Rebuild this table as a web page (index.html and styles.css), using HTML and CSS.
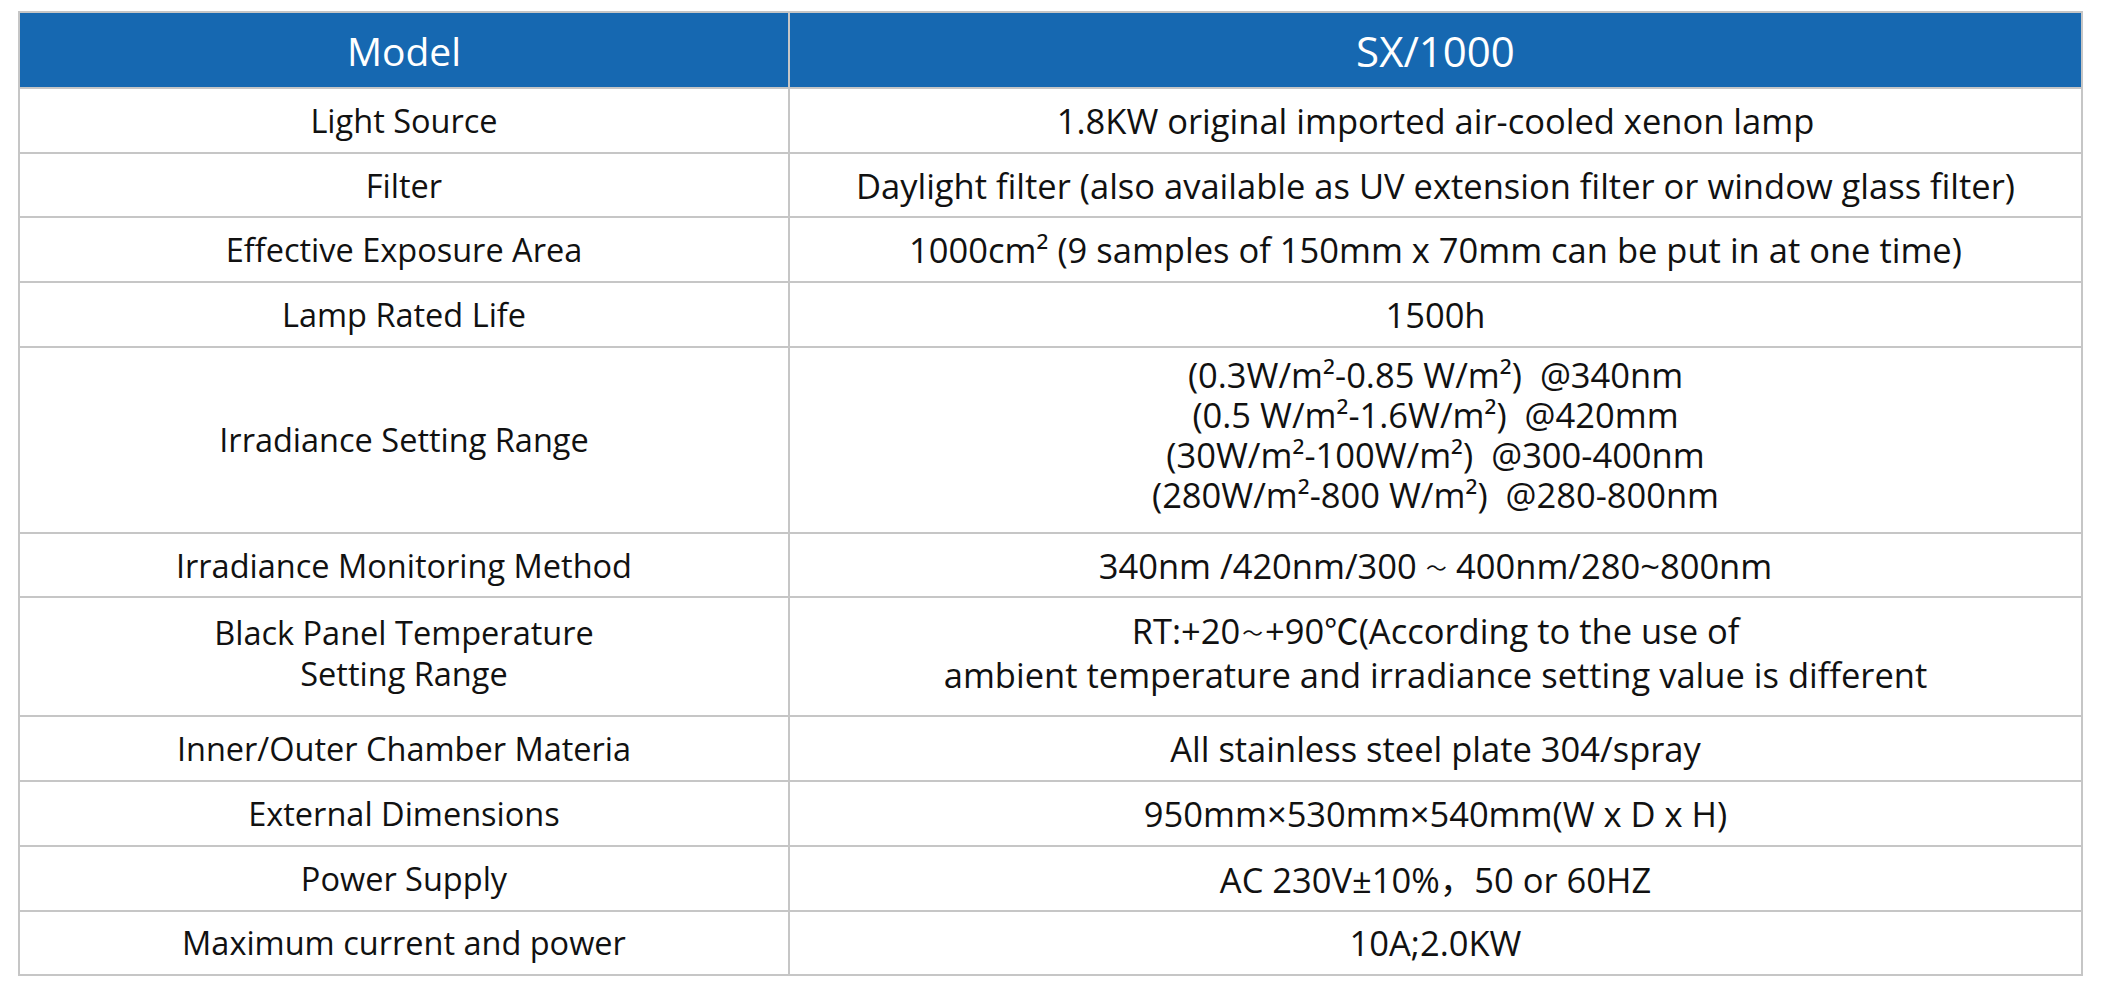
FILE: index.html
```html
<!DOCTYPE html>
<html lang="en">
<head>
<meta charset="utf-8">
<title>SX/1000 Specifications</title>
<link rel="stylesheet" href="styles.css">
</head>
<body>
<table class="spec">
  <colgroup>
    <col class="col-label">
    <col class="col-value">
  </colgroup>
  <thead>
    <tr class="row-head">
      <th class="label">Model</th>
      <th class="value">SX/1000</th>
    </tr>
  </thead>
  <tbody>
    <tr class="row"><td class="label">Light Source</td><td class="value">1.8KW original imported air-cooled xenon lamp</td></tr>
    <tr class="row"><td class="label">Filter</td><td class="value">Daylight filter (also available as UV extension filter or window glass filter)</td></tr>
    <tr class="row"><td class="label">Effective Exposure Area</td><td class="value">1000cm² (9 samples of 150mm x 70mm can be put in at one time)</td></tr>
    <tr class="row"><td class="label">Lamp Rated Life</td><td class="value">1500h</td></tr>
    <tr class="row row-tall">
      <td class="label">Irradiance Setting Range</td>
      <td class="value multi">
        <div>(0.3W/m²-0.85 W/m²)&nbsp; @340nm</div>
        <div>(0.5 W/m²-1.6W/m²)&nbsp; @420mm</div>
        <div>(30W/m²-100W/m²)&nbsp; @300-400nm</div>
        <div>(280W/m²-800 W/m²)&nbsp; @280-800nm</div>
      </td>
    </tr>
    <tr class="row"><td class="label">Irradiance Monitoring Method</td><td class="value">340nm /420nm/300<span class="fw">～</span>400nm/280~800nm</td></tr>
    <tr class="row row-mid">
      <td class="label multi2"><div>Black Panel Temperature</div><div>Setting Range</div></td>
      <td class="value multi2"><div>RT:+20<span class="fw tight">～</span>+90℃(According to the use of</div><div>ambient temperature and irradiance setting value is different</div></td>
    </tr>
    <tr class="row"><td class="label">Inner/Outer Chamber Materia</td><td class="value">All stainless steel plate 304/spray</td></tr>
    <tr class="row"><td class="label">External Dimensions</td><td class="value">950mm×530mm×540mm(W x D x H)</td></tr>
    <tr class="row"><td class="label">Power Supply</td><td class="value">AC 230V±10%，50 or 60HZ</td></tr>
    <tr class="row"><td class="label">Maximum current and power</td><td class="value">10A;2.0KW</td></tr>
  </tbody>
</table>
</body>
</html>
```

FILE: styles.css
```css
html, body {
  margin: 0;
  padding: 0;
  background: #ffffff;
}

body {
  padding: 11px 0 0 18px;
  font-family: "Open Sans", "Noto Sans CJK SC", sans-serif;
  color: #111111;
}

.spec {
  border-collapse: collapse;
  width: 2065px;
  table-layout: fixed;
}

.col-label { width: 770px; }

.spec th,
.spec td {
  border: 2px solid #c6c6c6;
  text-align: center;
  vertical-align: middle;
  padding: 0;
  font-weight: 400;
}

.spec th {
  background: #1668b1;
  color: #ffffff;
  height: 74px;
}

.spec th.label { font-size: 39px; }
.spec th.value { font-size: 42px; }

.spec td {
  height: 62.7px;
}

.spec td.label { font-size: 32.5px; }
.spec td.value { font-size: 34.5px; }

.row-tall td { height: 184px; }
.row-mid td { height: 119px; }

.spec td.multi {
  padding-bottom: 10px;
  box-sizing: border-box;
}

.spec td.multi2 {
  padding-bottom: 8px;
  box-sizing: border-box;
}

.multi div { line-height: 40px; }
.multi2 div { line-height: 41px; }

.fw {
  display: inline-block;
  font-size: 0.6em;
  margin: 0 0.45em;
  vertical-align: 0.15em;
}

.fw.tight {
  margin: 0 0.1em;
}
```
